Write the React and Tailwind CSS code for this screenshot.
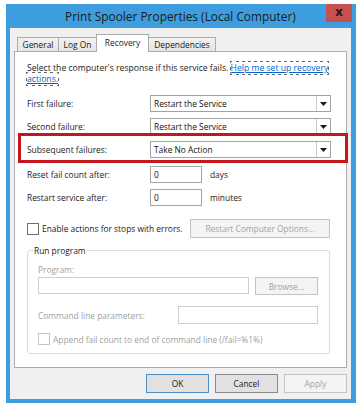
const BTN = 'flex items-center justify-center h-[19px] w-[63px] border';

function Combo({ value }) {
  return (
    <div className="flex h-[17px] w-[181px] border border-[#a3a3a3] bg-white">
      <div className="flex-1 flex items-center pl-[3px] text-[#111]">{value}</div>
      <div className="w-[14px] border-l border-[#c9c9c9] flex items-center justify-center">
        <svg width="7" height="4" viewBox="0 0 7 4">
          <path d="M0 0h7L3.5 4z" fill="#1a1a1a" />
        </svg>
      </div>
    </div>
  );
}

function Field({ value, unit }) {
  return (
    <>
      <div className="flex items-center h-[17px] w-[52px] border border-[#a3a3a3] bg-white pl-[3px] text-[#111]">
        {value}
      </div>
      <span className="ml-[8px]">{unit}</span>
    </>
  );
}

function Row({ label, className = '', children }) {
  return (
    <div className={`relative flex items-center h-[17px] ${className}`}>
      <div className="w-[123px]">{label}</div>
      {children}
    </div>
  );
}

function Check({ disabled }) {
  return (
    <div className={`w-[12px] h-[12px] border bg-white ${disabled ? 'border-[#c4c4c4]' : 'border-[#6f6f6f]'}`} />
  );
}

function Tab({ label, active, className = '' }) {
  if (active) {
    return (
      <div className={`relative z-10 -mb-px flex items-center justify-center h-[18px] pb-[2px] border border-b-0 border-[#acacac] bg-white ${className}`}>
        {label}
      </div>
    );
  }
  return (
    <div className={`flex items-center justify-center h-[14px] border border-b-0 border-[#acacac] bg-gradient-to-b from-[#f2f2f2] to-[#e5e5e5] ${className}`}>
      {label}
    </div>
  );
}

export default function App() {
  return (
    <div className="w-[360px] h-[408px] bg-white pt-[4px] pl-[6px] font-['Segoe_UI','Open_Sans',sans-serif] text-[8.4px] leading-[11px] text-[#1a1a1a]">
      <div className="w-[350px] h-[399px] bg-[#3e9ddf] flex flex-col pl-[4px] pr-[5px] pb-[4px]">
        {/* Title bar */}
        <div className="relative h-[24px] flex items-center justify-center text-[11.9px] text-[#1b1b1b]">
          Print Spooler Properties (Local Computer)
          <div className="absolute top-0 right-[-1px] w-[26px] h-[18px] bg-[#c75050] flex items-center justify-center text-[13px] font-bold text-[#1b1b1b] leading-none pb-[3px]">
            x
          </div>
        </div>

        {/* Client area */}
        <div className="flex-1 bg-[#f0f0f0] flex flex-col">
          <div className="h-[23px] flex items-end pl-[7px]">
            <Tab label="General" className="w-[42px]" />
            <Tab label="Log On" className="-ml-px w-[39px]" />
            <Tab label="Recovery" active className="-ml-px w-[53px]" />
            <Tab label="Dependencies" className="-ml-px w-[68px]" />
          </div>

          <div className="mx-[4px] h-[317px] border border-[#acacac] bg-white pl-[12px] pt-[11px]">
            <div className="whitespace-nowrap text-[8.65px]">
              Select the computer's response if this service fails.{' '}
              <span className="text-[#0066cc] underline outline outline-1 outline-dotted outline-[#666]">
                Help me set up recovery
                <br />
                actions.
              </span>
            </div>

            <Row label="First failure:" className="mt-[10px]">
              <Combo value="Restart the Service" />
            </Row>
            <Row label="Second failure:" className="mt-[6px]">
              <Combo value="Restart the Service" />
            </Row>
            <Row label="Subsequent failures:" className="mt-[6px]">
              <Combo value="Take No Action" />
              <div className="absolute left-[-9px] right-[-2px] top-[-8px] bottom-[-5px] border-[3px] border-[#c4161c]" />
            </Row>
            <Row label="Reset fail count after:" className="mt-[8px]">
              <Field value="0" unit="days" />
            </Row>
            <Row label="Restart service after:" className="mt-[6px]">
              <Field value="0" unit="minutes" />
            </Row>

            <div className="mt-[13px] flex items-center h-[19px]">
              <div className="w-[163px] flex items-center">
                <Check />
                <span className="ml-[3px]">Enable actions for stops with errors.</span>
              </div>
              <div className="flex items-center justify-center w-[140px] h-[19px] border border-[#c3c3c3] bg-[#f4f4f4] text-[#a3a3a3]">
                Restart Computer Options...
              </div>
            </div>

            <fieldset className="mt-[7px] w-[303px] border border-[#dcdcdc] rounded-[3px]">
              <legend className="ml-[5px] px-[1px]">Run program</legend>
              <div className="pl-[10px] pr-[11px] pb-[8px] text-[#a0a0a0]">
                <div className="mt-[8px] h-[11px]">Program:</div>
                <div className="mt-[2px] flex items-start gap-[6px]">
                  <div className="w-[211px] h-[17px] border border-[#cfcfcf] bg-white" />
                  <div className="flex items-center justify-center w-[63px] h-[18px] border border-[#c3c3c3] bg-[#f4f4f4]">
                    Browse...
                  </div>
                </div>
                <div className="mt-[11px] flex items-center h-[18px]">
                  <div className="w-[140px]">Command line parameters:</div>
                  <div className="w-[140px] h-[18px] border border-[#cfcfcf] bg-white" />
                </div>
                <div className="mt-[9px] flex items-center h-[12px]">
                  <Check disabled />
                  <span className="ml-[3px]">Append fail count to end of command line (/fail=%1%)</span>
                </div>
              </div>
            </fieldset>
          </div>

          <div className="mt-[6px] flex justify-end gap-[6px] pr-[4px]">
            <div className={`${BTN} border-[#4d8fcc] bg-[#e1e1e1]`}>OK</div>
            <div className={`${BTN} border-[#8a8a8a] bg-[#e1e1e1]`}>Cancel</div>
            <div className={`${BTN} border-[#c3c3c3] bg-[#f4f4f4] text-[#a3a3a3]`}>Apply</div>
          </div>
        </div>
      </div>
    </div>
  );
}
